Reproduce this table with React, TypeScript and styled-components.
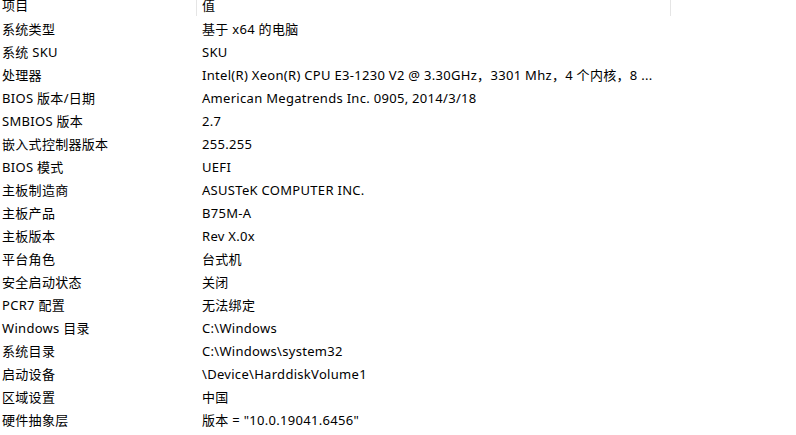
import React from "react";
import styled, { createGlobalStyle } from "styled-components";

const Global = createGlobalStyle`
  html, body { margin: 0; padding: 0; background: #ffffff; }
  body { overflow: hidden; }
`;

const Frame = styled.div`
  width: 796px;
  height: 435px;
  overflow: hidden;
  background: #ffffff;
  font-family: "Segoe UI", "Noto Sans", "Noto Sans CJK SC", sans-serif;
  font-size: 13px;
  letter-spacing: 0.3px;
  color: #000000;
`;

const List = styled.div`
  margin-top: -7px;
  display: flex;
  flex-direction: column;
`;

const HeaderRow = styled.div`
  display: grid;
  grid-template-columns: 197px 474px;
  height: 25px;
`;

const HeaderCell = styled.div<{ $pad: number }>`
  position: relative;
  line-height: 25px;
  padding-left: ${(p) => p.$pad}px;
  white-space: nowrap;
  &::after {
    content: "";
    position: absolute;
    right: 0;
    top: 0;
    height: 23px;
    width: 1px;
    background: #e5e5e5;
  }
`;

const Row = styled.div`
  display: grid;
  grid-template-columns: 197px 474px;
  height: 23px;
  line-height: 23px;
`;

const Cell = styled.div<{ $pad: number }>`
  padding-left: ${(p) => p.$pad}px;
  white-space: nowrap;
  overflow: hidden;
`;

const rows: [string, string][] = [
  ["系统类型", "基于 x64 的电脑"],
  ["系统 SKU", "SKU"],
  ["处理器", "Intel(R) Xeon(R) CPU E3-1230 V2 @ 3.30GHz，3301 Mhz，4 个内核，8 ..."],
  ["BIOS 版本/日期", "American Megatrends Inc. 0905, 2014/3/18"],
  ["SMBIOS 版本", "2.7"],
  ["嵌入式控制器版本", "255.255"],
  ["BIOS 模式", "UEFI"],
  ["主板制造商", "ASUSTeK COMPUTER INC."],
  ["主板产品", "B75M-A"],
  ["主板版本", "Rev X.0x"],
  ["平台角色", "台式机"],
  ["安全启动状态", "关闭"],
  ["PCR7 配置", "无法绑定"],
  ["Windows 目录", "C:\\Windows"],
  ["系统目录", "C:\\Windows\\system32"],
  ["启动设备", "\\Device\\HarddiskVolume1"],
  ["区域设置", "中国"],
  ["硬件抽象层", "版本 = \"10.0.19041.6456\""],
];

export default function App() {
  return (
    <Frame>
      <Global />
      <List>
        <HeaderRow>
          <HeaderCell $pad={2}>项目</HeaderCell>
          <HeaderCell $pad={5}>值</HeaderCell>
        </HeaderRow>
        {rows.map(([k, v]) => (
          <Row key={k}>
            <Cell $pad={2}>{k}</Cell>
            <Cell $pad={5}>{v}</Cell>
          </Row>
        ))}
      </List>
    </Frame>
  );
}
